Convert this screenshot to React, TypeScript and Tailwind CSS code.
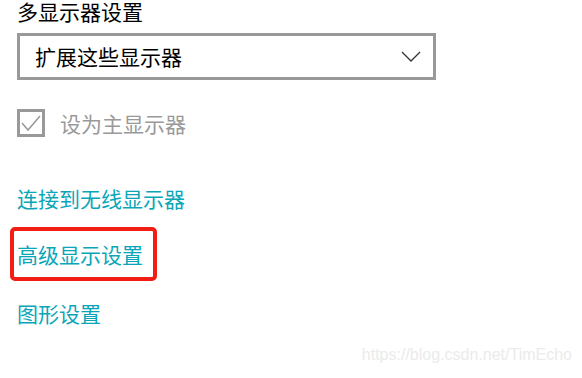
import React from "react";

const cjk = { fontFamily: '"Noto Sans CJK SC", "Noto Sans", sans-serif' };

function Chevron() {
  return (
    <svg width="20" height="11" viewBox="0 0 20 11" fill="none">
      <path d="M1 1 L10 10 L19 1" stroke="#333" strokeWidth="1.3" />
    </svg>
  );
}

function Check() {
  return (
    <svg width="22" height="22" viewBox="0 0 22 22" fill="none">
      <path d="M2 11 L8 18 L20 4" stroke="#999" strokeWidth="1.5" />
    </svg>
  );
}

export default function App() {
  return (
    <div
      className="relative h-[378px] w-[582px] overflow-hidden bg-white"
      style={cjk}
    >
      <div className="flex flex-col pl-[17px]">
        {/* Title */}
        <div className="text-[21px] leading-[22px] text-black">
          多显示器设置
        </div>

        {/* Dropdown */}
        <div className="mt-[11px] flex h-[47px] w-[419px] items-center justify-between border-[3px] border-[#999] pl-[15px] pr-[12px]">
          <span className="text-[21px] leading-none text-black">扩展这些显示器</span>
          <Chevron />
        </div>

        {/* Checkbox */}
        <div className="mt-[29px] flex items-center gap-[15px]">
          <div className="flex h-[28px] w-[28px] items-center justify-center border-[3px] border-[#999]">
            <Check />
          </div>
          <span className="text-[21px] leading-none text-[#999]">设为主显示器</span>
        </div>

        {/* Links */}
        <div className="mt-[51px] text-[21px] leading-none text-[#0aa6b8]">
          连接到无线显示器
        </div>

        <div className="-ml-[7px] mt-[18px] flex h-[54px] w-[147px] items-center rounded-[5px] border-4 border-[#f21d14] pl-[3px]">
          <span className="text-[21px] leading-none text-[#0aa6b8]">高级显示设置</span>
        </div>

        <div className="mt-[22px] text-[21px] leading-none text-[#0aa6b8]">
          图形设置
        </div>
      </div>

      {/* Watermark */}
      <div
        className="absolute right-[10px] top-[347px] text-[16px] leading-none text-[#ebebeb]"
        style={{ fontFamily: '"Liberation Sans", Arial, sans-serif' }}
      >
        https://blog.csdn.net/TimEcho
      </div>
    </div>
  );
}
